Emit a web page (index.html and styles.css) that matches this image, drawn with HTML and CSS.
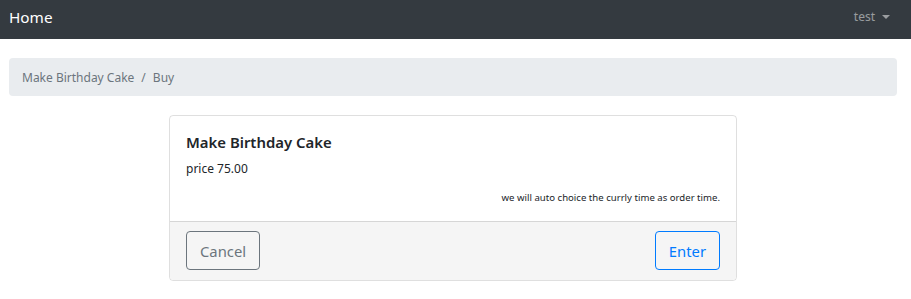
FILE: index.html
```html
<!DOCTYPE html>
<html>
<head>
    <meta charset="UTF-8">
    <title>Buy</title>
<link rel="stylesheet" href="styles.css">
</head>
<body>
<nav class="navbar">
    <a class="brand" href="#">Home</a>
    <a class="user_menu" href="#">test <span class="caret"></span></a>
</nav>
<main class="content">
    <ol class="breadcrumb">
        <li><a href="#">Make Birthday Cake</a></li>
        <li class="active">Buy</li>
    </ol>
    <section class="card">
        <div class="card_body">
            <h5 class="card_title">Make Birthday Cake</h5>
            <p class="price">price 75.00</p>
            <p class="notice">we will auto choice the currly time as order time.</p>
        </div>
        <div class="card_footer">
            <button class="btn btn_cancel">Cancel</button>
            <button class="btn btn_enter">Enter</button>
        </div>
    </section>
</main>
</body>
</html>
```

FILE: styles.css
```css
html, body {
    margin: 0;
    padding: 0;
}
body {
    font-family: "Noto Sans", "Open Sans", sans-serif;
    background: #FFF;
    color: #212529;
}
a {
    text-decoration: none;
}
.navbar {
    display: flex;
    align-items: center;
    justify-content: space-between;
    height: 33px;
    padding: 0 21px 6px 9px;
    background-color: #343A40;
}
.brand {
    color: #FFF;
    font-size: 15.3px;
}
.user_menu {
    color: rgba(255, 255, 255, 0.5);
    font-size: 12px;
    display: flex;
    align-items: center;
}
.caret {
    display: inline-block;
    margin-left: 7px;
    border-top: 4px solid rgba(255, 255, 255, 0.5);
    border-left: 4px solid transparent;
    border-right: 4px solid transparent;
}
.content {
    margin: 0 14px 0 9px;
}
.breadcrumb {
    display: flex;
    align-items: center;
    list-style: none;
    height: 38px;
    margin: 19px 0 0;
    padding: 0 13px;
    background-color: #E9ECEF;
    border-radius: 4px;
    font-size: 12px;
    color: #6C757D;
}
.breadcrumb a {
    color: #6C757D;
}
.breadcrumb li + li::before {
    content: "/";
    padding: 0 7px 0 7px;
}
.card {
    width: 566px;
    margin: 19px auto 0;
    border: 1px solid rgba(0, 0, 0, 0.125);
    border-radius: 4px;
}
.card_body {
    padding: 16px 16px 17px;
}
.card_title {
    margin: 0;
    font-size: 14.9px;
    font-weight: 600;
    line-height: 20px;
}
.price {
    margin: 7px 0 0;
    font-size: 12px;
    line-height: 20px;
}
.notice {
    margin: 13px 0 0;
    font-size: 9.6px;
    line-height: 12px;
    text-align: right;
}
.card_footer {
    display: flex;
    justify-content: space-between;
    padding: 9px 16px 10px;
    border-top: 1px solid rgba(0, 0, 0, 0.125);
    background-color: #F5F5F5;
    border-radius: 0 0 4px 4px;
}
.btn {
    height: 39px;
    padding: 0 13px;
    font-family: inherit;
    font-size: 14.8px;
    background: transparent;
    border-radius: 4px;
}
.btn_cancel {
    color: #6C757D;
    border: 1px solid #6C757D;
}
.btn_enter {
    color: #007BFF;
    border: 1px solid #007BFF;
}
```
